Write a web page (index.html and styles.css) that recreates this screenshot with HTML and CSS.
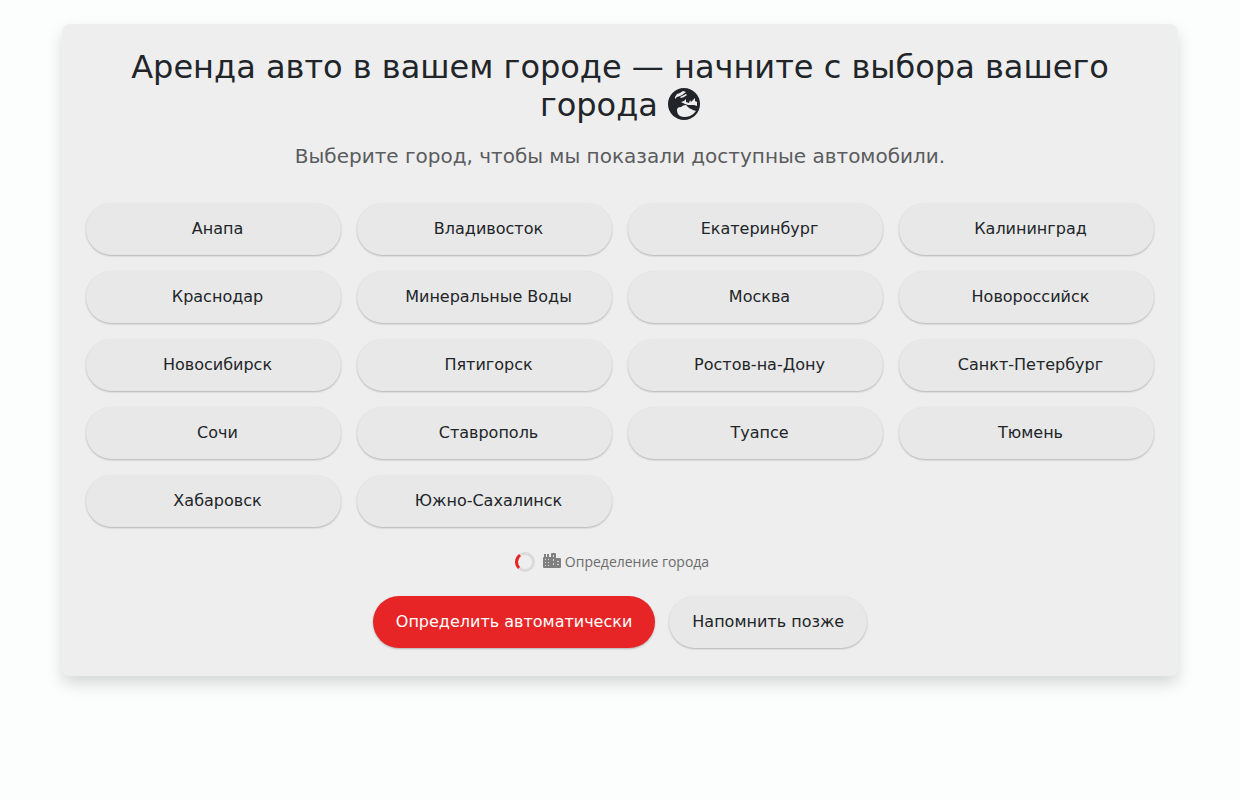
FILE: index.html
```html
<!DOCTYPE html>
<html lang="ru">
<head>
<meta charset="utf-8">
<meta name="viewport" content="width=device-width, initial-scale=1">
<title>Аренда авто — выбор города</title>
<link rel="stylesheet" href="styles.css">
</head>
<body>
<main class="page">
  <section class="card">
    <h1 class="title">Аренда авто в вашем городе — начните с выбора вашего города
      <svg class="globe" viewBox="0 0 32 32" aria-hidden="true"><circle cx="16" cy="16" r="16" fill="#212529"/><g fill="#eee"><path d="M9 22Q9 19 13 19Q15 17 18 17L21 20L25 22L28 23Q26 26 22 28Q16 30 12 28Q9 26 9 22Z"/><path d="M7 9L9 6L12 5L15 3L18 4L14 7L12 8L9 9L7 11Z"/><path d="M12 9L18 6L19 7L16 9L13 10Z"/><path d="M13 14L16 13L18 11L18 14L21 15L22 12L23 14L25 12L27 10L27 13L29 14L29 18L26 17L20 17L17 16Z"/></g></svg>
    </h1>
    <p class="subtitle">Выберите город, чтобы мы показали доступные автомобили.</p>
    <div class="cities">
      <button type="button" class="button city">Анапа</button>
      <button type="button" class="button city">Владивосток</button>
      <button type="button" class="button city">Екатеринбург</button>
      <button type="button" class="button city">Калининград</button>
      <button type="button" class="button city">Краснодар</button>
      <button type="button" class="button city">Минеральные Воды</button>
      <button type="button" class="button city">Москва</button>
      <button type="button" class="button city">Новороссийск</button>
      <button type="button" class="button city">Новосибирск</button>
      <button type="button" class="button city">Пятигорск</button>
      <button type="button" class="button city">Ростов-на-Дону</button>
      <button type="button" class="button city">Санкт-Петербург</button>
      <button type="button" class="button city">Сочи</button>
      <button type="button" class="button city">Ставрополь</button>
      <button type="button" class="button city">Туапсе</button>
      <button type="button" class="button city">Тюмень</button>
      <button type="button" class="button city">Хабаровск</button>
      <button type="button" class="button city">Южно-Сахалинск</button>
    </div>
    <div class="status" role="status">
      <svg class="spinner" viewBox="0 0 20 20" aria-hidden="true"><circle cx="10" cy="10" r="8.5" fill="none" stroke="#dadada" stroke-width="3"/><path d="M5 3.1A8.5 8.5 0 0 0 4 16" fill="none" stroke="#e82526" stroke-width="3"/></svg>
      <svg class="buildings" viewBox="0 0 18 18" aria-hidden="true"><path fill="#808080" d="M0 5Q0 4 1 4V1H3V4H4V1H6V4H8V1Q8 0 9 0H12Q13 0 13 1V5H17Q18 5 18 6V14Q18 15 17 15H1Q0 15 0 14Z"/><path fill="#d8d8d8" d="M2 6h1v1H2zm3 0h1v1H5zM2 9h1v1H2zm3 0h1v1H5zM2 12h1v1H2zm3 0h1v1H5zM10 2h1v2h-1zm0 4h1v2h-1zm0 4h1v2h-1zm4-2h2v1h-2zm0 3h2v1h-2z"/></svg>
      <span>Определение города</span>
    </div>
    <div class="actions">
      <button type="button" class="button primary">Определить автоматически</button>
      <button type="button" class="button">Напомнить позже</button>
    </div>
  </section>
</main>
</body>
</html>
```
FILE: styles.css
```css
* { box-sizing: border-box; }

body {
  margin: 0;
  background: #fcfefd;
  color: #212529;
  font-family: "DejaVu Sans", sans-serif;
  font-size: 16px;
  line-height: 24px;
}

.page {
  max-width: 1140px;
  margin: 0 auto;
  padding: 24px 12px;
}

.card {
  padding: 24px 24px 28px;
  border-radius: 8px;
  background: #eee;
  box-shadow: 0 8px 16px rgba(0, 0, 0, 0.15);
  text-align: center;
}

.title {
  margin: 0 0 16px;
  font-size: 32px;
  font-weight: 400;
  line-height: 38px;
}

.globe {
  width: 32px;
  height: 32px;
  vertical-align: -4px;
}

.subtitle {
  margin: 0 0 31px;
  color: #5a5c5e;
  font-size: 20px;
  line-height: 32px;
}

.cities {
  display: grid;
  grid-template-columns: repeat(auto-fill, minmax(220px, 1fr));
  gap: 16px;
}

.button {
  min-height: 52px;
  padding: 12px 23px;
  border: 0;
  border-radius: 26px;
  background: #e8e8e8;
  box-shadow: 0 1px 2px rgba(0, 0, 0, 0.25);
  color: #212529;
  font: inherit;
  cursor: pointer;
}

.city { padding: 12px 16px 12px 24px; }

.primary {
  background: #e82526;
  color: #fff;
}

.status {
  display: flex;
  align-items: center;
  justify-content: center;
  margin: 23px 16px 22px 0;
  color: #6c6c6c;
  font-family: "Open Sans", sans-serif;
  font-size: 14px;
  font-weight: 500;
}

.spinner {
  width: 20px;
  height: 20px;
  margin-right: 8px;
}

.buildings {
  width: 18px;
  height: 18px;
  margin-right: 4px;
}

.actions {
  display: flex;
  flex-wrap: wrap;
  justify-content: center;
  gap: 14px;
}
```
